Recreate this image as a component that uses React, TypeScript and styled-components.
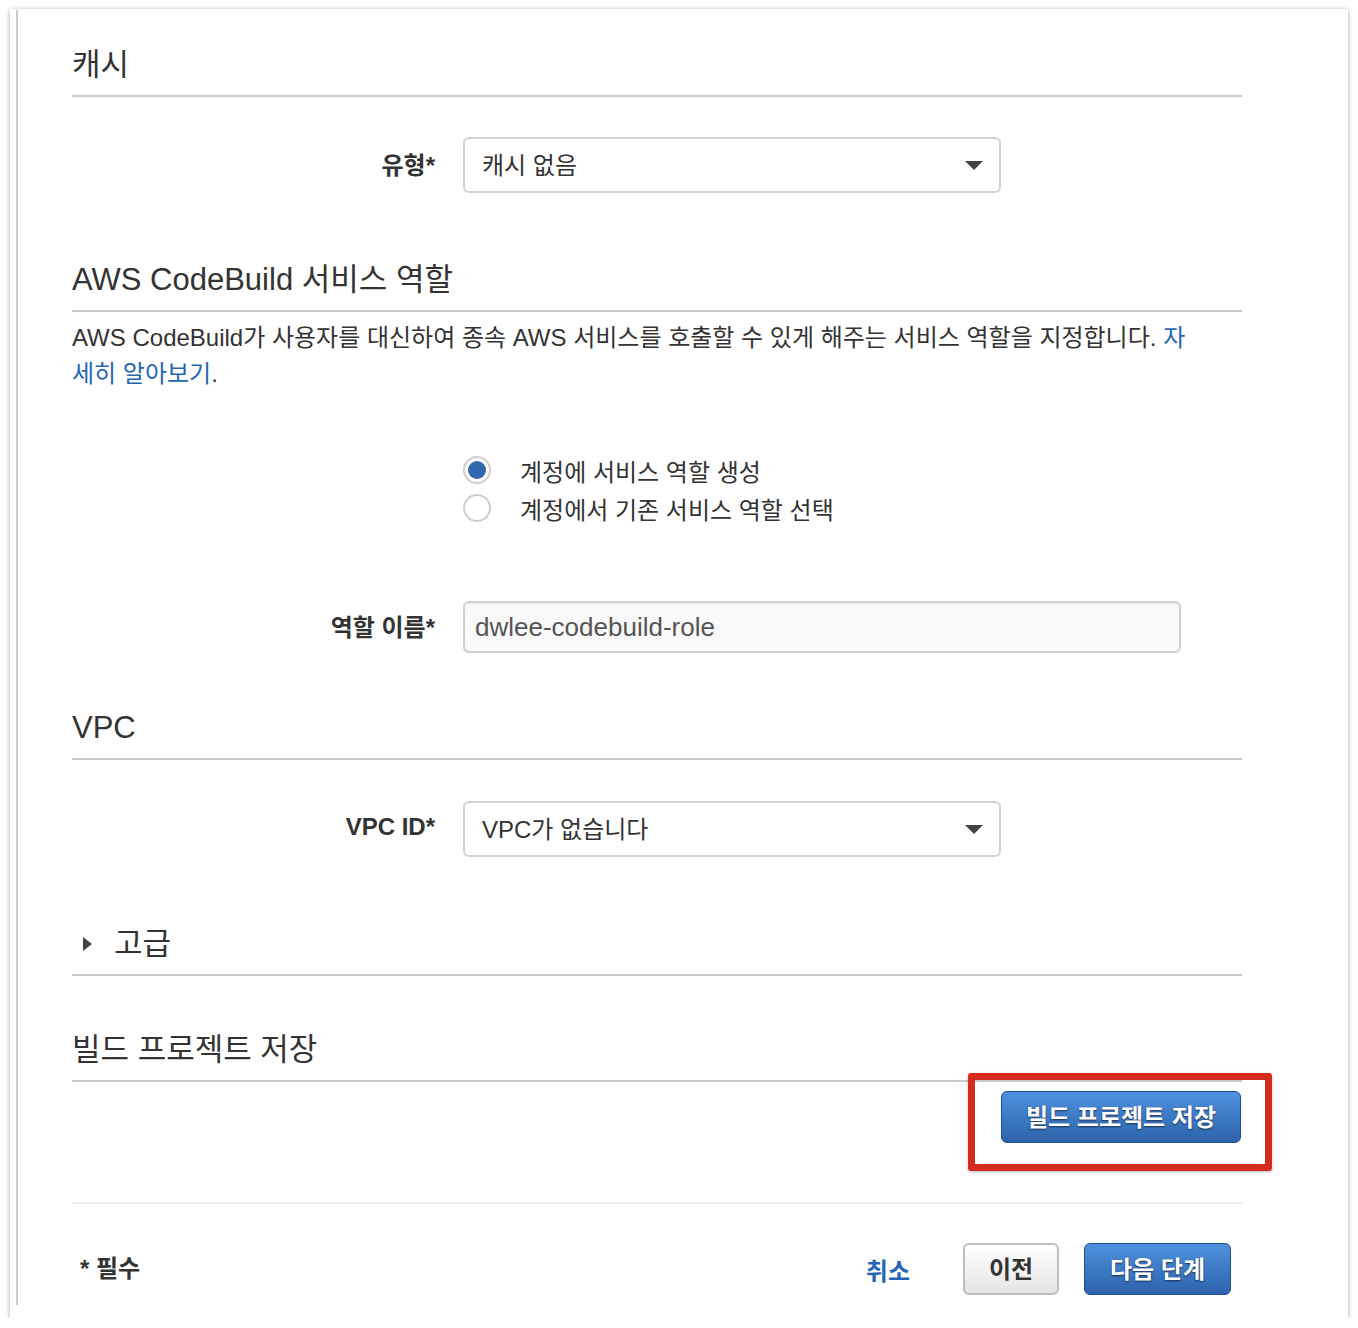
import React from "react";
import styled, { createGlobalStyle } from "styled-components";

const Global = createGlobalStyle`
  html, body { margin: 0; padding: 0; background: #fff; }
  body { font-family: "Liberation Sans", "Noto Sans CJK KR", sans-serif; color: #333; }
  * { box-sizing: border-box; }
`;

const Card = styled.div`
  margin: 9px 0 0 10px;
  width: 1338px;
  height: 1309px;
  background: #fff;
  box-shadow: 0 1px 5px rgba(0, 0, 0, 0.35);
  padding: 1px 0 13px 6px;
`;

const Inner = styled.div`
  height: 100%;
  border-left: 2px solid #ccc;
  padding-left: 54px;
  display: flex;
  flex-direction: column;
`;

const Content = styled.div`
  width: 1170px;
  display: flex;
  flex-direction: column;
`;

const Heading = styled.h2<{ $mt: number }>`
  margin: ${(p) => p.$mt}px 0 0;
  font-size: 31px;
  font-weight: 400;
  line-height: 36px;
  padding-bottom: 12px;
  border-bottom: 2px solid #ccc;
  color: #333;
  display: flex;
  align-items: center;
`;

const Caret = styled.span`
  width: 0;
  height: 0;
  margin: 0 22px 0 11px;
  border-top: 7px solid transparent;
  border-bottom: 7px solid transparent;
  border-left: 9px solid #444;
`;

const FieldRow = styled.div<{ $mt: number }>`
  margin-top: ${(p) => p.$mt}px;
  display: grid;
  grid-template-columns: 363px auto;
  column-gap: 28px;
  align-items: center;
`;

const Label = styled.label`
  text-align: right;
  font-size: 24px;
  font-weight: 700;
  color: #333;
  margin-top: -4px;
`;

const Select = styled.div`
  width: 538px;
  height: 56px;
  border: 2px solid #d2d2d2;
  border-radius: 6px;
  background: #fff;
  display: flex;
  align-items: center;
  justify-content: space-between;
  padding: 0 16px 0 17px;
  font-size: 24px;
  color: #333;
  & > span:first-child {
    margin-top: -4px;
  }
`;

const Arrow = styled.span`
  width: 0;
  height: 0;
  border-left: 9px solid transparent;
  border-right: 9px solid transparent;
  border-top: 9px solid #444;
`;

const Input = styled.div`
  width: 718px;
  height: 52px;
  border: 2px solid #d0d0d0;
  border-radius: 6px;
  background: #f9f9f9;
  box-shadow: inset 0 1px 2px rgba(0, 0, 0, 0.06);
  display: flex;
  align-items: center;
  padding-left: 10px;
  font-size: 26px;
  color: #555;
`;

const Description = styled.p`
  margin: 8px 0 0;
  width: 1130px;
  font-size: 24px;
  line-height: 36px;
  color: #333;
`;

const Link = styled.a`
  color: #2466b4;
  text-decoration: none;
`;

const RadioGroup = styled.div`
  margin-top: 59px;
  padding-left: 391px;
  display: flex;
  flex-direction: column;
`;

const RadioRow = styled.div`
  height: 38px;
  display: flex;
  align-items: center;
  gap: 29px;
  font-size: 24px;
  color: #333;
`;

const RadioCircle = styled.span<{ $checked?: boolean }>`
  width: 28px;
  height: 28px;
  border-radius: 50%;
  border: 2px solid #cfcfcf;
  background: #fff;
  display: flex;
  align-items: center;
  justify-content: center;
  &::after {
    content: "";
    width: 18px;
    height: 18px;
    border-radius: 50%;
    background: ${(p) => (p.$checked ? "#2f67b1" : "transparent")};
  }
`;

const SaveRow = styled.div`
  margin-top: 9px;
  display: flex;
  justify-content: flex-end;
  padding-right: 1px;
`;

const Annotated = styled.div`
  position: relative;
`;

const RedBox = styled.div`
  position: absolute;
  top: -18px;
  left: -33px;
  right: -31px;
  bottom: -28px;
  border: 7px solid #d52b1e;
  border-radius: 3px;
  box-shadow: 0 1px 3px rgba(0, 0, 0, 0.3);
  pointer-events: none;
`;

const Button = styled.button<{ $primary?: boolean; $w: number }>`
  width: ${(p) => p.$w}px;
  height: 52px;
  border-radius: 6px;
  font-family: inherit;
  font-size: 24px;
  font-weight: 700;
  cursor: pointer;
  padding: 0 0 3px;
  border: ${(p) => (p.$primary ? "1.5px solid #1f4f8f" : "2px solid #bdbdbd")};
  background: ${(p) =>
    p.$primary
      ? "linear-gradient(#4f91de, #2c63ab)"
      : "linear-gradient(#ffffff, #e4e4e4)"};
  color: ${(p) => (p.$primary ? "#fff" : "#333")};
  text-shadow: ${(p) => (p.$primary ? "0 1px 2px rgba(0,0,0,0.6)" : "none")};
`;

const LightRule = styled.hr`
  margin: 59px 0 0;
  border: 0;
  height: 2px;
  background: #ececec;
`;

const Footer = styled.div`
  margin-top: 39px;
  height: 52px;
  display: flex;
  align-items: center;
  justify-content: space-between;
  padding: 0 11px 0 8px;
`;

const Required = styled.span`
  font-size: 24px;
  font-weight: 700;
  color: #333;
  margin-top: -6px;
`;

const Actions = styled.div`
  display: flex;
  align-items: center;
`;

const CancelLink = styled.a`
  font-size: 24px;
  font-weight: 700;
  color: #2466b4;
  margin-right: 53px;
  text-decoration: none;
`;

const Spacer = styled.span`
  width: 25px;
`;

export default function App() {
  return (
    <>
      <Global />
      <Card>
        <Inner>
          <Content>
            <Heading $mt={37}>캐시</Heading>
            <FieldRow $mt={40}>
              <Label>유형*</Label>
              <Select>
                <span>캐시 없음</span>
                <Arrow />
              </Select>
            </FieldRow>

            <Heading $mt={69}>AWS CodeBuild 서비스 역할</Heading>
            <Description>
              AWS CodeBuild가 사용자를 대신하여 종속 AWS 서비스를 호출할 수 있게 해주는 서비스 역할을 지정합니다.{" "}
              <Link href="#">자세히 알아보기</Link>.
            </Description>

            <RadioGroup>
              <RadioRow>
                <RadioCircle $checked />
                <span>계정에 서비스 역할 생성</span>
              </RadioRow>
              <RadioRow>
                <RadioCircle />
                <span>계정에서 기존 서비스 역할 선택</span>
              </RadioRow>
            </RadioGroup>

            <FieldRow $mt={74}>
              <Label>역할 이름*</Label>
              <Input>dwlee-codebuild-role</Input>
            </FieldRow>

            <Heading $mt={57}>VPC</Heading>
            <FieldRow $mt={41}>
              <Label>VPC ID*</Label>
              <Select>
                <span>VPC가 없습니다</span>
                <Arrow />
              </Select>
            </FieldRow>

            <Heading $mt={69}>
              <Caret />
              고급
            </Heading>

            <Heading $mt={56}>빌드 프로젝트 저장</Heading>
            <SaveRow>
              <Annotated>
                <Button $primary $w={240}>빌드 프로젝트 저장</Button>
                <RedBox />
              </Annotated>
            </SaveRow>

            <LightRule />
            <Footer>
              <Required>* 필수</Required>
              <Actions>
                <CancelLink href="#">취소</CancelLink>
                <Button $w={96}>이전</Button>
                <Spacer />
                <Button $primary $w={147}>다음 단계</Button>
              </Actions>
            </Footer>
          </Content>
        </Inner>
      </Card>
    </>
  );
}
